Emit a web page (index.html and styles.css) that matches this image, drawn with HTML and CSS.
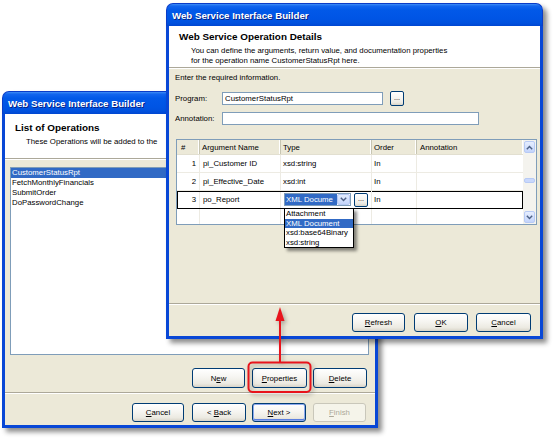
FILE: index.html
```html
<!DOCTYPE html>
<html>
<head>
<meta charset="utf-8">
<link rel="stylesheet" href="styles.css">
</head>
<body>
<div class="desk">

  <div class="win win-back">
    <div class="titlebar">Web Service Interface Builder</div>
    <div class="frame">
      <div class="hdr hdr-back">
        <div class="hdr-title">List of Operations</div>
        <div class="hdr-sub sub-back">These Operations will be added to the</div>
      </div>
      <div class="body">
        <div class="list">
          <div class="list-item sel">CustomerStatusRpt</div>
          <div class="list-item">FetchMonthlyFinancials</div>
          <div class="list-item">SubmitOrder</div>
          <div class="list-item">DoPasswordChange</div>
        </div>
        <div class="btnrow row-mid">
          <div class="btn w53">N<u>e</u>w</div>
          <div class="btn w55 gap7"><u>P</u>roperties</div>
          <div class="btn w54 gap6"><u>D</u>elete</div>
        </div>
        <div class="spacer"></div>
        <div class="sep"></div>
        <div class="btnrow row-bottom-back">
          <div class="btn w52"><u>C</u>ancel</div>
          <div class="btn w54 gap8">&lt;&nbsp;<u>B</u>ack</div>
          <div class="btn w54 gap6 default"><u>N</u>ext&nbsp;&gt;</div>
          <div class="btn w53 gap7 disabled"><u>F</u>inish</div>
        </div>
        <div class="pad-back"></div>
      </div>
    </div>
  </div>

  <div class="win win-front">
    <div class="titlebar">Web Service Interface Builder</div>
    <div class="frame">
      <div class="hdr hdr-front">
        <div class="hdr-title">Web Service Operation Details</div>
        <div class="hdr-sub sub-front">You can define the arguments, return value, and documentation properties<br>for the operation name CustomerStatusRpt here.</div>
      </div>
      <div class="body">
        <div class="intro">Enter the required information.</div>
        <div class="field field-first">
          <div class="lbl">Program:</div>
          <div class="tb tb-prog">CustomerStatusRpt</div>
          <div class="btn dots">...</div>
        </div>
        <div class="field field-second">
          <div class="lbl">Annotation:</div>
          <div class="tb tb-ann"></div>
        </div>

        <div class="grid">
          <div class="grid-main">
            <div class="g-row g-head">
              <div class="c c1 hc">#</div>
              <div class="c c2 hc">Argument Name</div>
              <div class="c c3 hc">Type</div>
              <div class="c c4 hc">Order</div>
              <div class="c c5 hc">Annotation</div>
            </div>
            <div class="g-row">
              <div class="c c1 num">1</div>
              <div class="c c2">pi_Customer ID</div>
              <div class="c c3">xsd:string</div>
              <div class="c c4">In</div>
              <div class="c c5"></div>
            </div>
            <div class="g-row">
              <div class="c c1 num">2</div>
              <div class="c c2">pi_Effective_Date</div>
              <div class="c c3">xsd:int</div>
              <div class="c c4">In</div>
              <div class="c c5"></div>
            </div>
            <div class="g-row g-sel">
              <div class="c c1 num">3</div>
              <div class="c c2">po_Report</div>
              <div class="c c3 typecell">
                <div class="combo">
                  <div class="combo-text">XML Docume</div>
                  <div class="combo-btn">
                    <svg width="7" height="5" viewBox="0 0 7 5"><path d="M0.8 0.8 L3.5 3.6 L6.2 0.8" fill="none" stroke="#4D6185" stroke-width="1.4"/></svg>
                  </div>
                </div>
                <div class="btn dots dots-grid">...</div>
                <div class="dropdown">
                  <div class="dd-item">Attachment</div>
                  <div class="dd-item dd-sel">XML Document</div>
                  <div class="dd-item">xsd:base64Binary</div>
                  <div class="dd-item">xsd:string</div>
                </div>
              </div>
              <div class="c c4">In</div>
              <div class="c c5"></div>
            </div>
            <div class="g-row g-fill">
              <div class="c c1"></div>
              <div class="c c2"></div>
              <div class="c c3"></div>
              <div class="c c4"></div>
              <div class="c c5"></div>
            </div>
          </div>
          <div class="sb">
            <div class="sb-btn">
              <svg width="7" height="5" viewBox="0 0 7 5"><path d="M0.8 4.2 L3.5 1.4 L6.2 4.2" fill="none" stroke="#4D6185" stroke-width="1.4"/></svg>
            </div>
            <div class="sb-gap"></div>
            <div class="sb-thumb"></div>
            <div class="spacer"></div>
            <div class="sb-btn">
              <svg width="7" height="5" viewBox="0 0 7 5"><path d="M0.8 0.8 L3.5 3.6 L6.2 0.8" fill="none" stroke="#4D6185" stroke-width="1.4"/></svg>
            </div>
          </div>
        </div>

        <div class="spacer"></div>
        <div class="sep"></div>
        <div class="btnrow row-bottom-front">
          <div class="btn w53"><u>R</u>efresh</div>
          <div class="btn w54 gap9"><u>O</u>K</div>
          <div class="btn w55 gap8"><u>C</u>ancel</div>
        </div>
        <div class="pad-front"></div>
      </div>
    </div>
  </div>

  <svg class="callout" width="553" height="439" viewBox="0 0 553 439">
    <rect x="248.5" y="362.5" width="62" height="29.5" rx="4" ry="4" fill="none" stroke="#E8141C" stroke-width="2"/>
    <line x1="280" y1="320" x2="280" y2="362" stroke="#E8141C" stroke-width="2"/>
    <polygon points="280,307 275.5,321 284.5,321" fill="#E8141C"/>
  </svg>

</div>
</body>
</html>
```

FILE: styles.css
```css
* { box-sizing: border-box; }

body {
  margin: 0;
  background: #ffffff;
  font-family: "Liberation Sans", Arial, sans-serif;
  font-size: 7.8px;
  color: #000;
}

.desk {
  position: relative;
  width: 553px;
  height: 439px;
  overflow: hidden;
}

/* ---------- windows ---------- */
.win {
  position: absolute;
  display: flex;
  flex-direction: column;
  border-radius: 7px 7px 0 0;
  box-shadow: 4px 4px 5px rgba(0, 0, 0, 0.45);
}
.win-back  { left: 2px;   top: 91px; width: 376px; height: 337px; }
.win-front { left: 166px; top: 3px;  width: 377px; height: 336px; }

.titlebar {
  flex: none;
  height: 23px;
  border-radius: 7px 7px 0 0;
  background: linear-gradient(#3E8EF7 0, #1466EE 2px, #0259E8 6px, #0055E5 14px, #0051DE 19px, #0043CC 23px);
  border: 1px solid #0A3CC8;
  border-bottom: 0;
  color: #fff;
  font-weight: bold;
  font-size: 9.7px;
  line-height: 23px;
  padding-left: 5px;
  white-space: nowrap;
  overflow: hidden;
  text-shadow: 1px 1px 0 #0A2283;
}

.frame {
  flex: 1;
  display: flex;
  flex-direction: column;
  background: #ECE9D8;
  border: 3px solid #0847D6;
  border-top: 0;
  min-height: 0;
}

/* ---------- wizard header ---------- */
.hdr {
  flex: none;
  background: #fff;
  border-bottom: 1px solid #ACA899;
  white-space: nowrap;
  overflow: hidden;
}
.hdr-back  { height: 45px; padding: 8px 0 0 10px; }
.hdr-front { height: 42px; padding: 5px 0 0 10px; }

.hdr-title {
  font-weight: bold;
  font-size: 9.9px;
  line-height: 12px;
}
.hdr-sub { line-height: 10px; margin-top: 3px; }
.sub-back  { padding-left: 11px; }
.sub-front { padding-left: 12px; }

.body {
  flex: 1;
  display: flex;
  flex-direction: column;
  border-top: 1px solid #fff;
  min-height: 0;
}

.spacer { flex: 1; }

.sep {
  flex: none;
  height: 2px;
  border-top: 1px solid #ACA899;
  border-bottom: 1px solid #fff;
}

/* ---------- list box ---------- */
.list {
  flex: none;
  margin: 7px 6px 0 5px;
  height: 188px;
  background: #fff;
  border: 1px solid #7F9DB9;
}
.list-item {
  height: 10px;
  line-height: 10px;
  padding-left: 1px;
  white-space: nowrap;
}
.list-item.sel { background: #316AC5; color: #fff; }

/* ---------- buttons ---------- */
.btnrow {
  flex: none;
  display: flex;
  justify-content: flex-end;
}
.row-mid          { margin-top: 13px; height: 20px; padding-right: 8px; }
.row-bottom-back  { margin-top: 9px;  height: 19px; padding-right: 9px; }
.row-bottom-front { margin-top: 8px;  height: 19px; padding-right: 9px; }
.pad-back  { flex: none; height: 3px; }
.pad-front { flex: none; height: 4px; }

.btn {
  height: 100%;
  display: flex;
  align-items: center;
  justify-content: center;
  border: 1px solid #003C74;
  border-radius: 3px;
  background: linear-gradient(#ffffff 0%, #F6F5F1 45%, #ECEAE2 80%, #D9D4C8 100%);
  white-space: nowrap;
}
.btn.default { box-shadow: inset 0 0 0 1px #8DA9EE, inset 0 -1px 0 1px #5C7FDE; }
.btn.disabled {
  border-color: #C9C7BA;
  color: #ACA899;
  background: #F5F4EA;
}
.w52 { width: 52px; }
.w53 { width: 53px; }
.w54 { width: 54px; }
.w55 { width: 55px; }
.gap6 { margin-left: 6px; }
.gap7 { margin-left: 7px; }
.gap8 { margin-left: 8px; }
.gap9 { margin-left: 9px; }

/* ---------- form ---------- */
.intro { flex: none; padding: 4px 0 0 6px; line-height: 10px; }

.field {
  flex: none;
  display: flex;
  align-items: center;
  height: 15px;
  padding-left: 6px;
}
.field-first  { margin-top: 8px; }
.field-second { margin-top: 5px; }
.lbl { width: 47px; }
.tb {
  height: 13px;
  border: 1px solid #7F9DB9;
  background: #fff;
  line-height: 11px;
  padding-left: 2px;
  white-space: nowrap;
}
.tb-prog { width: 161px; }
.tb-ann  { width: 257px; }

.dots {
  width: 14px;
  height: 15px;
  margin-left: 7px;
  border-radius: 2px;
  font-size: 7px;
  line-height: 8px;
  align-items: flex-end;
  padding-bottom: 3px;
}

/* ---------- grid ---------- */
.grid {
  flex: none;
  margin: 13px 0 0 7px;
  width: 361px;
  height: 86px;
  border: 1px solid #7F9DB9;
  background: #fff;
  display: flex;
}
.grid-main {
  flex: 1;
  display: flex;
  flex-direction: column;
}
.g-row {
  flex: none;
  display: flex;
  height: 18px;
  border-bottom: 1px solid #EDEBE3;
}
.g-head {
  height: 15px;
  background: #ECE9D8;
  border-bottom: 1px solid #E2DFD0;
}
.g-fill { flex: 1; border-bottom: 0; }
.g-sel { outline: 1px solid #000; outline-offset: -1px; position: relative; z-index: 2; }

.c {
  flex: none;
  display: flex;
  align-items: center;
  padding-left: 3px;
  border-right: 1px solid #EDEBE3;
  white-space: nowrap;
}
.hc {
  border-right: 1px solid #C7C5B2;
  box-shadow: inset -1px 0 0 #fff;
}
.c1 { width: 23px; }
.c2 { width: 81px; }
.c3 { width: 91px; padding-left: 2px; }
.c4 { width: 45px; padding-left: 2px; }
.c5 { width: 106px; border-right: 0; }
.g-head .c1 { padding-left: 4px; }
.g-head .c2 { padding-left: 2px; }
.num { justify-content: flex-end; padding-right: 3px; padding-left: 0; }

.typecell { position: relative; padding-left: 3px; }
.combo {
  display: flex;
  height: 13px;
  width: 67px;
  border: 1px solid #7F9DB9;
  background: #fff;
}
.combo-text {
  width: 52px;
  background: #316AC5;
  color: #fff;
  line-height: 11px;
  padding-left: 1px;
  overflow: hidden;
  white-space: nowrap;
}
.combo-btn {
  width: 13px;
  display: flex;
  align-items: center;
  justify-content: center;
  border: 1px solid #B5C8F3;
  border-radius: 2px;
  background: linear-gradient(#E3ECFE, #C4D5FB);
}
.dots-grid { margin-left: 3px; height: 14px; }

.dropdown {
  position: absolute;
  left: 3px;
  top: 17px;
  width: 70px;
  height: 40px;
  border: 1px solid #000;
  background: #fff;
  box-shadow: 3px 3px 3px rgba(0, 0, 0, 0.45);
  z-index: 5;
}
.dd-item {
  height: 9.5px;
  line-height: 9.5px;
  padding-left: 1px;
  white-space: nowrap;
}
.dd-sel { background: #316AC5; color: #fff; }

/* scrollbar */
.sb {
  flex: none;
  width: 13px;
  display: flex;
  flex-direction: column;
  background: #F4F3EE;
  padding: 1px 0;
}
.sb-btn {
  flex: none;
  height: 12px;
  margin: 0 1px;
  display: flex;
  align-items: center;
  justify-content: center;
  border: 1px solid #B7CAF5;
  border-radius: 2px;
  background: linear-gradient(#E6EEFE, #C3D4FB);
}
.sb-gap { flex: none; height: 25px; }
.sb-thumb {
  flex: none;
  height: 5px;
  margin: 0 1px;
  border: 1px solid #B7CAF5;
  border-radius: 2px;
  background: #C9D8FC;
}

/* ---------- callout ---------- */
.callout {
  position: absolute;
  left: 0;
  top: 0;
  pointer-events: none;
  z-index: 10;
  filter: drop-shadow(2px 2px 2px rgba(0, 0, 0, 0.3));
}
```
